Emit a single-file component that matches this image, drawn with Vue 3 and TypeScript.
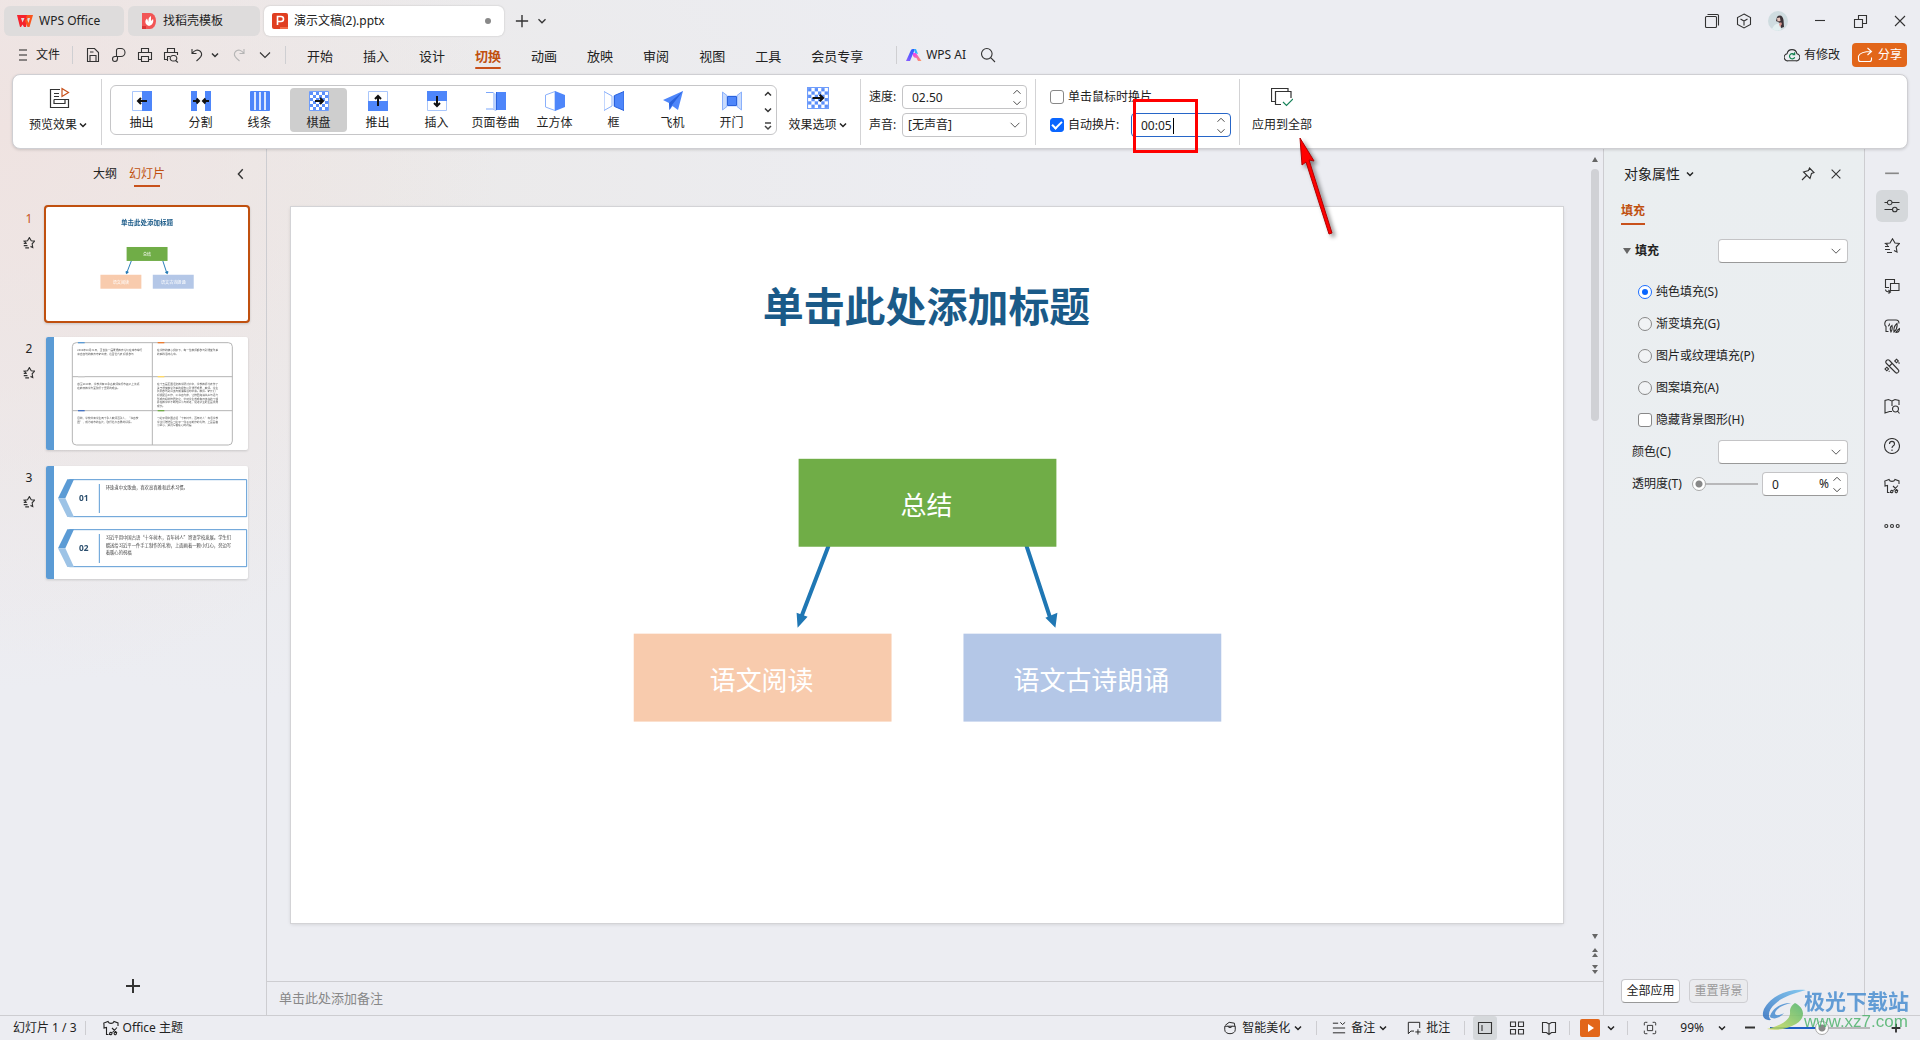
<script setup lang="ts">
import { h, ref } from 'vue'

const icons: Record<string, string> = {
  menu: 'M4 3H12M4 8H12M4 13H12',
  save: 'M2.5 14.5V1.5H9.5L13.5 5.5V14.5ZM5 14V8.5H11V14M5 5H8.5',
  output: 'M5.5 9.5V3A2 2 0 0 1 7.5 1.500H10A4 4 0 0 1 10 9.500H4A2.500 2.500 0 0 0 4 14.500C6 14.500 6.500 13 6.500 11.500V9.500',
  print: 'M4.500 5.500V1.500H11.500V5.500M4 12.500H1.500V5.500H14.500V12.500H12M4.500 9.500H11.500V14.500H4.500Z',
  preview: 'M4.500 5.500V1.500H11.500V5.500M4 12.500H1.500V5.500H14.500V8M4.500 14V9.500H7M10.500 8.500A2.800 2.800 0 1 0 10.500 14A2.800 2.800 0 1 0 10.500 8.500M12.500 13.500L15 15.500',
  undo: 'M3 2V6.500H7.500M3 6.500C5.500 3 9 2 11.500 4.500C14.500 8 11 11 7.500 14',
  redo: 'M13 2V6.500H8.500M13 6.500C10.500 3 7 2 4.500 4.500C1.500 8 5 11 8.500 14',
  down: 'M4 6L8 10L12 6',
  up: 'M4 10L8 6L12 10',
  left: 'M10 2.500L5 8L10 13.500',
  wide: 'M3 5.500L8 10.500L13 5.500',
  search: 'M6.800 1.500A5.300 5.300 0 1 0 6.800 12.100A5.300 5.300 0 1 0 6.800 1.500M10.700 10.700L15 15',
  windows: 'M1.500 4.500A1 1 0 0 1 2.500 3.500H11.500A1 1 0 0 1 12.500 4.500V13.500A1 1 0 0 1 11.500 14.500H2.500A1 1 0 0 1 1.500 13.500ZM3.500 1.500H13.500A1 1 0 0 1 14.500 2.500V12.500',
  cube: 'M8 1L14.500 4.500V11.500L8 15L1.500 11.500V4.500ZM4.500 6L8 8L11.500 6M8 8V12.500',
  minus: 'M3 7.500H13',
  restore: 'M2.500 6.500H10.500V14.500H2.500ZM6.500 6V2.500H14.500V10.500H11',
  close: 'M3 3L13 13M13 3L3 13',
  share: 'M1.500 9V12.500A2 2 0 0 0 3.500 14.500H12.500A2 2 0 0 0 14.500 12.500V10.500M1.500 9C3 6 7 4.500 14 4.500M10.500 1L14.500 4.500L10.500 8',
  pin: 'M9.500 2L14 6.500L11.500 7.500L10 12.500L3.500 6L8.500 4.500ZM6.500 9.500L2 14',
  sliders: 'M0.500 4.500H3.500M8 4.500H15.500M5.700 2.200A2.300 2.300 0 1 0 5.700 6.800A2.300 2.300 0 1 0 5.700 2.200M0.500 11.500H8.500M13 11.500H15.500M10.800 9.200A2.300 2.300 0 1 0 10.800 13.800A2.300 2.300 0 1 0 10.800 9.200',
  star: 'M4 7.500L1.500 5.500L6 5L8.500 0.800L11 5L15.500 5.500L12.200 9L13 14L10 12.500M1 8.500H5M1 11.500H6M3 14.500H8',
  shapes: 'M5 9.500H1.500V1.500H10.500V5M6.500 5.500H15V12.500H6.500ZM1.500 11.500C1.500 13.500 3 14 6 14M4.500 12L6.500 14L4.500 15.500',
  design: 'M4.500 13.500H2V8.500C0 7 0.500 2 4 2H12C14 2 15 3.500 15 5.500M4 8C5.500 8 5.500 6.500 5.500 5.500M7 14C5.500 10.500 6.500 8.500 8 7.500C8.500 10 8.500 12 7 14ZM10 14C9.500 10 11 7 13 5.500C13.500 9 12.500 12 10 14ZM12 14.500C13 12.500 14 11 15.500 10.500C15.500 13 14.500 14.500 12 14.500Z',
  tools: 'M2.500 5.500A1.800 1.800 0 0 1 5.500 2.500L14 11.500A1.800 1.800 0 0 1 11.500 14.500ZM5.500 8L8 5.500M12.500 1.200L14.300 3L12.500 4.800L10.700 3ZM14.500 4.500L15.500 5.500M2.800 9.200L4.600 11L2.800 12.800L1 11ZM4.800 13L5.500 13.700',
  booksearch: 'M5.500 13.500L1 15V2.500L4.500 1.500L8 3V8M8 3L11 1.500L15 2.500V7M8 13.500L5 13.500M11.500 8A3 3 0 1 0 11.500 14A3 3 0 1 0 11.500 8M13.500 13L15.500 15.500',
  help: 'M8 0.500A7.500 7.500 0 1 0 8 15.500A7.500 7.500 0 1 0 8 0.500M5.500 6C5.500 2.500 10.500 2.500 10.500 6C10.500 8 8 7.500 8 10M8 11.500V13',
  shirt: 'M5 14.500H3.500V7.500L1 8V5L0.800 3L5 1.500C6 4 10 4 11 1.500L15 3V6M5.500 14.500H8M9 8L14 13M14 7.500L9.500 12.500M9 13.500A1.200 1.200 0 1 0 9 13.600M13.500 13.500A1.200 1.200 0 1 0 13.500 13.600',
  dots: 'M2.300 6.500A1.500 1.500 0 1 0 2.300 9.500A1.500 1.500 0 1 0 2.300 6.500M8 6.500A1.500 1.500 0 1 0 8 9.500A1.500 1.500 0 1 0 8 6.500M13.700 6.500A1.500 1.500 0 1 0 13.700 9.500A1.500 1.500 0 1 0 13.700 6.500',
  plus: 'M8 1V15M1 8H15',
  beautify: 'M2.500 5L7 1.500L13 2.500L13.500 6M2 6H14V10C14 16 2 16 2 10ZM5.500 6C7 8 9 8 10.500 6',
  notes: 'M1 2.500H7M1 8H15M1 13.500H15M9.500 1.500L12 4L15 1.500',
  comment: 'M14.500 8V1.500H1.500V14.500L4.500 11.500H8M12.500 9.500V15.500M9.500 12.500H15.500',
  normal: 'M1.500 2.500H14.500V13.500H1.500ZM5 5V11',
  grid: 'M1.500 2H6.500V6.500H1.500ZM9.500 2H14.500V6.500H9.500ZM1.500 9.500H6.500V14H1.500ZM9.500 9.500H14.500V14H9.500Z',
  read: 'M8 4V14M8 4L5.500 2.500H1.500V12.500H5.500L8 14.500L10.500 12.500H14.500V2.500H10.500Z',
  fit: 'M1.500 5V2.500A1 1 0 0 1 2.500 1.500H5M11 1.500H13.500A1 1 0 0 1 14.500 2.500V5M14.500 11V13.500A1 1 0 0 1 13.500 14.500H11M5 14.500H2.500A1 1 0 0 1 1.500 13.500V11M5 5H11V11H5Z',
}

const Ic = (p: { n: string; s?: number; w?: number }) =>
  h('svg', { viewBox: '0 0 16 16', width: p.s ?? 16, height: p.s ?? 16, fill: 'none', stroke: 'currentColor', 'stroke-width': p.w ?? 1.1, 'aria-hidden': 'true' }, [
    h('path', { d: icons[p.n] }),
  ])
Ic.props = ['n', 's', 'w']

const menus = ['开始', '插入', '设计', '切换', '动画', '放映', '审阅', '视图', '工具', '会员专享']
const effects = ['抽出', '分割', '线条', '棋盘', '推出', '插入', '页面卷曲', '立方体', '框', '飞机', '开门']
const quick = ['save', 'output', 'print', 'preview', 'undo']
const side = ['sliders', 'star', 'shapes', 'design', 'tools', 'booksearch', 'help', 'shirt', 'dots']
const fills = ['纯色填充(S)', '渐变填充(G)', '图片或纹理填充(P)', '图案填充(A)']

// checkerboard squares shared by the gallery tile and the options button
const checks: { x: number; y: number }[] = []
for (let r = 0; r < 6; r++) for (let c = 0; c < 6; c++) if ((r + c) % 2 === 0) checks.push({ x: 1 + c * 3, y: 1 + r * 3 })

const nodes = [
  { x: 508, y: 252, fill: '#70ad47', t: '总结' },
  { x: 343, y: 427, fill: '#f8cbad', t: '语文阅读' },
  { x: 673, y: 427, fill: '#b4c7e7', t: '语文古诗朗诵' },
]

const cells = [
  { x: 232, y: 42, bar: '#5b9bd5', lines: ['2008年10月31日，全省第一届素质教育论坛在本市举行', '来自各地的教育专家出席，近百位代表 积极参与'] },
  { x: 471, y: 42, bar: '#ed7d31', lines: ['在学校的精心组织下，每一位教师都参与到课堂改革', '的实践活动之中。'] },
  { x: 232, y: 144, bar: '#cccccc', lines: ['截至2010年，学校共有40余名教师获得市级以上奖项', '在教育教学方面取得了显著的成绩。'] },
  { x: 471, y: 144, bar: '#ffd966', lines: ['在十五届全国语文教学研讨会中，学校教师代表作了', '关于课堂教学改革的报告以及课题成果，教师、学生', '共同参与到阅读与朗诵等活动中来。教师、家长们', '积极配合工作，以书香为伴，让校园充满书声与活力', '形成良好的校园文化，带动学生养成每日读书的习惯', '并在教学中不断地探索与前进，促进学生的全面发展', '成长。'] },
  { x: 232, y: 246, bar: '#4472c4', lines: ['目前，学校共有学生两千余人教师百余人，“书香校', '园”，成为城市的名片，取得社会各界的好评。'] },
  { x: 471, y: 246, bar: '#70ad47', lines: ['习近平用中国古语“十年树木，百年树人”寄语学校', '学生们赠送给习近平一件手工制作的礼物，上面画着', '小红心，旁边写着暖心的祝福'] },
]

const agenda = [
  { n: '01', y: 40, lines: ['环珠道中文歌曲，喜欢高喜雅和武术习惯。'] },
  { n: '02', y: 190, lines: ['习近平用中国古语“十年树木，百年树人”寄语学校发展。学生们', '赠送给习近平一件手工制作的礼物，上面画着一颗小红心，旁边写', '着暖心的祝福'] },
]

const menu = ref('切换')
const effect = ref('棋盘')
const speed = ref('02.50')
const advance = ref('00:05')
const onClick = ref(false)
const auto = ref(true)
const fill = ref(fills[0])
const hideBg = ref(false)
const alpha = ref(0)
const zoom = ref(52)
</script>

<template>
  <div class="app">
    <header class="titlebar">
      <button class="tab home">
        <svg width="16" height="12" viewBox="0 0 16 12"><path d="M0 0H11L10 3H4L5.500 7.500L7.500 3H10.500L9 12H7L5.500 9.500L4 12H3Z" fill="#f5222d" /><path d="M10 0H16L12.500 12H10.500L8 6L9.500 3L11.500 8L13 3H9Z" fill="#fa541c" /></svg>
        WPS Office
      </button>
      <button class="tab docer">
        <svg width="16" height="16" viewBox="0 0 16 16"><path d="M1 0H9A6 8 0 0 1 9 16H1Z" fill="#f25555" /><path d="M1 13H5V16H1Z" fill="#d93636" /><path d="M8 13C3 11 4 7 6 5.500L7.500 9C7 6 8 4 10 3V8L12 6C13 9 11.500 12 8 13Z" fill="#fff" /></svg>
        找稻壳模板
      </button>
      <button class="tab file">
        <svg width="16" height="16" viewBox="0 0 16 16"><rect width="16" height="16" rx="2" fill="#e03e20" /><path d="M8 14H16V16H8Z" fill="#f36b45" /><path d="M5.500 12V3.500H9A2.500 2.500 0 0 1 9 8.500H5.500" fill="none" stroke="#fff" stroke-width="1.600" /></svg>
        演示文稿(2).pptx
        <i class="dot"></i>
      </button>
      <button class="ico new" aria-label="新建"><Ic n="plus" :s="14" :w="1.6" /></button>
      <button class="ico" aria-label="更多"><Ic n="down" :s="14" :w="1.5" /></button>
      <div class="winbtns">
        <button class="ico" aria-label="窗口"><Ic n="windows" /></button>
        <button class="ico" aria-label="应用"><Ic n="cube" /></button>
        <button class="ico" aria-label="账户">
          <svg width="20" height="20" viewBox="0 0 20 20"><circle cx="10" cy="10" r="10" fill="#cfdce0" /><path d="M4 18C6 13 9 12 12 13L13 19A10 10 0 0 1 4 18Z" fill="#e4f0f1" /><path d="M9 6C12 3 15 5 15.500 9L16 16L13 17L12 12L8 10Z" fill="#3b3237" /><path d="M9 7L12 6.500L12.500 10L9.500 10.500Z" fill="#e5c4bb" /><path d="M11 13L13 11L14 13L12 16Z" fill="#d8968f" /></svg>
        </button>
        <button class="ico far" aria-label="最小化"><Ic n="minus" /></button>
        <button class="ico far" aria-label="还原"><Ic n="restore" /></button>
        <button class="ico far" aria-label="关闭"><Ic n="close" /></button>
      </div>
    </header>

    <nav class="menubar">
      <button class="filebtn"><Ic n="menu" />文件</button>
      <i class="vr"></i>
      <div class="quick">
        <button v-for="q in quick" :key="q" class="ico" :aria-label="q"><Ic :n="q" /></button>
      </div>
      <button class="ico" aria-label="撤销列表"><Ic n="down" :s="12" :w="2" /></button>
      <button class="ico redo" aria-label="恢复"><Ic n="redo" /></button>
      <button class="ico" aria-label="自定义"><Ic n="wide" /></button>
      <i class="vr"></i>
      <div class="menus">
        <button v-for="m in menus" :key="m" :class="{ on: m === menu }" @click="menu = m">{{ m }}</button>
      </div>
      <i class="vr"></i>
      <button class="ai">
        <svg width="16" height="12" viewBox="0 0 16 12"><defs><linearGradient id="ai1" x1="0" y1="1" x2="1" y2="0"><stop offset="0" stop-color="#8f5bff" /><stop offset="1" stop-color="#1c5fff" /></linearGradient><linearGradient id="ai2" x1="0" y1="0" x2="1" y2="1"><stop offset="0" stop-color="#e93cff" /><stop offset="1" stop-color="#ff9a5c" /></linearGradient></defs><path d="M0 12L5 1Q5.500 0 7 0H9L4 12Z" fill="url(#ai1)" /><path d="M7 4H10L15.500 12H12L10.500 9Q8 9 7 7Z" fill="url(#ai2)" /><path d="M8 0H10L12 5L9 4Z" fill="#31b5ff" /></svg>
        WPS AI
      </button>
      <button class="ico" aria-label="搜索"><Ic n="search" /></button>
      <div class="right">
        <button class="cloud">
          <svg width="16" height="16" viewBox="0 0 18 16" fill="none"><path d="M5 14.500A4 4 0 0 1 3.500 6.500A5.600 5.600 0 0 1 14.500 6.500A4 4 0 0 1 13 14.500Z" stroke="#333" stroke-width="1.200" /><path d="M11.500 7.500A3 3 0 1 0 12 10.500M9.500 7.500H12V5" stroke="#13824f" stroke-width="1.300" /></svg>
          有修改
        </button>
        <button class="share"><Ic n="share" />分享</button>
      </div>
    </nav>

    <section class="ribbon">
      <div class="group first">
        <button class="big">
          <svg width="22" height="22" viewBox="0 0 22 22" fill="none" stroke="#333" stroke-width="1.200"><path d="M12 2.500H2.500V20.500H20.500V12.500H6M6 6.500H11M6 9.500H11M6 12.500V16.500H17V13" /><path d="M14 1.500L20.500 5.500L14 9.500Z" stroke="#c8511b" /></svg>
          <span>预览效果<Ic n="down" :s="12" :w="2" /></span>
        </button>
      </div>

      <div class="gallery">
        <button v-for="(e, i) in effects" :key="i" class="tile" :class="{ on: e === effect }" @click="effect = e">
          <svg width="20" height="20" viewBox="0 0 20 20">
            <g v-if="i === 0"><path d="M.5.500H19.500V19.500H.5Z" fill="#fff" stroke="#a9c6fb" /><path d="M10 0H20V20H10Z" fill="#4e86fa" /><path d="M15 10H6M9 7L6 10L9 13" class="ar" /></g>
            <g v-else-if="i === 1"><path d="M0 0H20V20H0Z" fill="#4e86fa" /><path d="M6 0H14V20H6Z" fill="#fff" /><path d="M2 10H8M5.500 7.500L8 10L5.500 12.500M18 10H12M14.500 7.500L12 10L14.500 12.500" class="ar" /></g>
            <g v-else-if="i === 2"><path d="M.5.500H19.500V19.500H.5Z" fill="#dbe7ff" stroke="#4e86fa" /><path d="M1 0H4V20H1ZM6 0H9V20H6ZM11 0H14V20H11ZM16 0H19V20H16Z" fill="#4e86fa" /></g>
            <g v-else-if="i === 3"><path d="M.5.500H19.500V19.500H.5Z" fill="#fff" stroke="#6f9dfb" /><rect v-for="(c, k) in checks" :key="k" :x="c.x" :y="c.y" width="3" height="3" fill="#5b8ffa" /><path d="M6 10H14M11 7L14 10L11 13" class="ar" /></g>
            <g v-else-if="i === 4"><path d="M.5.500H19.500V19.500H.5Z" fill="#fff" stroke="#a9c6fb" /><path d="M0 10H20V20H0Z" fill="#4e86fa" /><path d="M10 15V5M7 8L10 5L13 8" class="ar" /></g>
            <g v-else-if="i === 5"><path d="M.5.500H19.500V19.500H.5Z" fill="#fff" stroke="#a9c6fb" /><path d="M0 0H20V10H0Z" fill="#4e86fa" /><path d="M10 5V15M7 12L10 15L13 12" class="ar" /></g>
            <g v-else-if="i === 6"><path d="M-.5 1.500H7L10 4V19.500L7 18H-.5Z" fill="#fff" stroke="#7ba7fb" /><path d="M7 1L10 3V20L7 18Z" fill="#bcd2fd" /><path d="M10 1H20V19H10Z" fill="#4e86fa" /><path d="M10.500 1V19" stroke="#2a62dc" /></g>
            <g v-else-if="i === 7"><path d="M10 .5L.5 4V16L10 19.500Z" fill="#fff" stroke="#8ab0fb" /><path d="M10 0L20 4V16L10 20Z" fill="#4e86fa" /></g>
            <g v-else-if="i === 8"><path d="M0 .5L8 5V15L0 19.500Z" fill="#fff" stroke="#8ab0fb" /><path d="M9 5L10.500 4V16L9 15Z" fill="#bcd2fd" /><path d="M10.500 4.500L20 .5V19.500L10.500 15.500Z" fill="#4e86fa" stroke="#2a62dc" /></g>
            <g v-else-if="i === 9"><path d="M20 0L0 9L6 12L6.500 19L9.500 15L15 19Z" fill="#4e86fa" /><path d="M20 0L6 12L6.500 19L9 14Z" fill="#2a62dc" /></g>
            <g v-else><path d="M.5 1L5 4.500V15.500L.5 19ZM19.500 1L15 4.500V15.500L19.500 19Z" fill="#c9dbfd" stroke="#8ab0fb" /><path d="M5 4H15V16H5Z" fill="#dbe7ff" /><path d="M5.500 5.500H14.500V14.500H5.500Z" fill="#4e86fa" stroke="#2a62dc" /></g>
          </svg>
          {{ e }}
        </button>
        <div class="scrolls">
          <button class="ico" aria-label="上一行"><Ic n="up" :s="12" :w="2" /></button>
          <button class="ico" aria-label="下一行"><Ic n="down" :s="12" :w="2" /></button>
          <button class="ico" aria-label="全部效果"><svg width="12" height="12" viewBox="0 0 12 12" fill="none" stroke="#444" stroke-width="1.500"><path d="M3 3H9M3 6L6 9L9 6" /></svg></button>
        </div>
      </div>

      <div class="group opts">
        <button class="big">
          <svg width="22" height="22" viewBox="0 0 20 20"><path d="M.5.500H19.500V19.500H.5Z" fill="#fff" stroke="#6f9dfb" /><rect v-for="(c, k) in checks" :key="k" :x="c.x" :y="c.y" width="3" height="3" fill="#5b8ffa" /><path d="M5 10H14.500M11.500 7L14.500 10L11.500 13" class="ar" /></svg>
          <span>效果选项<Ic n="down" :s="12" :w="2" /></span>
        </button>
      </div>

      <div class="group fields">
        <div class="row">
          <label for="speed">速度:</label>
          <div class="spin box"><input id="speed" v-model="speed" /><span class="steps"><button aria-label="增加"><Ic n="up" :s="14" /></button><button aria-label="减少"><Ic n="down" :s="14" /></button></span></div>
        </div>
        <div class="row">
          <label for="sound">声音:</label>
          <div class="box drop"><select id="sound"><option>[无声音]</option></select><Ic n="wide" :s="14" /></div>
        </div>
      </div>

      <div class="group timing">
        <div class="row"><label class="check"><input v-model="onClick" type="checkbox" />单击鼠标时换片</label></div>
        <div class="row">
          <label class="check wide"><input v-model="auto" type="checkbox" />自动换片:</label>
          <div class="spin box focus"><input v-model="advance" aria-label="自动换片时间" /><i class="caret"></i><span class="steps"><button aria-label="增加"><Ic n="up" :s="14" /></button><button aria-label="减少"><Ic n="down" :s="14" /></button></span><i class="redbox"></i></div>
        </div>
      </div>

      <div class="group apply">
        <button class="big">
          <svg width="22" height="22" viewBox="0 0 22 22" fill="none" stroke="#333" stroke-width="1.200"><path d="M4 14.500H.5V1.500H17V4M10 17.500H4.500V4.500H20V11" /><path d="M12 15L15.500 18.500L22 12" stroke="#17835a" /></svg>
          <span>应用到全部</span>
        </button>
        <svg class="pointer" width="46" height="108" viewBox="0 0 46 108"><path d="M4 2L18 25L13 24L36 97L33 98L10 26L6 29Z" fill="#f00" stroke="#b00000" stroke-width="1" stroke-linejoin="round" /></svg>
      </div>
    </section>

    <main class="main">
      <aside class="slides">
        <div class="sh">
          <button>大纲</button>
          <button class="on">幻灯片</button>
          <button class="ico col" aria-label="收起"><Ic n="left" :s="14" :w="1.6" /></button>
        </div>
        <ol>
          <li class="cur">
            <div class="num">1<Ic n="star" :s="12" :w="1.5" /></div>
            <div class="thumb">
              <svg viewBox="0 0 1273 716">
                <text x="636" y="115" class="ttl">单击此处添加标题</text>
                <g stroke="#1f77b4" stroke-width="6" fill="#1f77b4"><path d="M538 339L510 412M736 339L760 412" /><path d="M507 420L504 407L519 411ZM765 420L753 412L769 407Z" /></g>
                <g v-for="n in nodes" :key="n.t"><rect :x="n.x" :y="n.y" width="258" height="88" :fill="n.fill" /><text :x="n.x + 129" :y="n.y + 56" class="nt">{{ n.t }}</text></g>
              </svg>
            </div>
          </li>
          <li>
            <div class="num">2<Ic n="star" :s="12" :w="1.5" /></div>
            <div class="thumb">
              <svg viewBox="0 0 606 340">
                <path d="M0 0H24V340H0Z" fill="#5b9bd5" />
                <g transform="translate(-138 0)">
                  <rect x="217" y="17" width="480" height="307" rx="12" fill="none" stroke="#b5b5b5" stroke-width="3" />
                  <path d="M457 17V324M217 119H697M217 221H697" stroke="#b5b5b5" stroke-width="3" />
                  <g v-for="(c, k) in cells" :key="k"><rect :x="c.x + 2" :y="c.y - 27" width="20" height="4" :fill="c.bar" /><text v-for="(l, j) in c.lines" :key="j" :x="c.x" :y="c.y + j * 11" class="tiny">{{ l }}</text></g>
                </g>
              </svg>
            </div>
          </li>
          <li>
            <div class="num">3<Ic n="star" :s="12" :w="1.5" /></div>
            <div class="thumb">
              <svg viewBox="0 0 606 340">
                <path d="M0 0H24V340H0Z" fill="#5b9bd5" />
                <g v-for="a in agenda" :key="a.n" :transform="`translate(0 ${a.y})`">
                  <path d="M70 1H602V112H70" fill="none" stroke="#5b9bd5" stroke-width="3" />
                  <path d="M64 0H84L58 57H36Z" fill="#5b9bd5" /><path d="M36 57H58L84 113H64Z" fill="#9dc3e6" />
                  <path d="M160 14V101" stroke="#5b9bd5" stroke-width="3" />
                  <text x="99" y="64" class="no">{{ a.n }}</text>
                  <text v-for="(l, j) in a.lines" :key="j" x="179" :y="29 + j * 23" class="small">{{ l }}</text>
                </g>
              </svg>
            </div>
          </li>
        </ol>
        <button class="ico add" aria-label="新建幻灯片"><Ic n="plus" :w="2" /></button>
      </aside>

      <section class="editor">
        <div class="stage">
          <svg class="slide" viewBox="0 0 1273 716">
            <text x="636" y="115" class="ttl">单击此处添加标题</text>
            <path d="M538 339L510 412M736 339L760 412" stroke="#1f77b4" stroke-width="4" />
            <path d="M507 421L506 406L517 410ZM765 421L755 411L767 406Z" fill="#1f77b4" />
            <g v-for="n in nodes" :key="n.t"><rect :x="n.x" :y="n.y" width="258" height="88" :fill="n.fill" /><text :x="n.x + 128" :y="n.y + 56" class="nt">{{ n.t }}</text></g>
          </svg>
          <div class="vbar">
            <svg width="12" height="12" viewBox="0 0 12 12"><path d="M6 4L9 9H3Z" fill="#666" /></svg>
            <div class="track"><i></i></div>
            <svg width="12" height="12" viewBox="0 0 12 12"><path d="M6 8L9 3H3Z" fill="#666" /></svg>
            <svg width="12" height="12" viewBox="0 0 12 12"><path d="M6 1L9 5H3ZM6 6L9 10H3Z" fill="#666" /></svg>
            <svg width="12" height="12" viewBox="0 0 12 12"><path d="M6 6L9 2H3ZM6 11L9 7H3Z" fill="#666" /></svg>
          </div>
        </div>
        <input class="note" placeholder="单击此处添加备注" aria-label="备注" />
      </section>

      <aside class="props">
        <div class="ph">
          <button class="pt">对象属性<Ic n="down" :s="12" :w="2" /></button>
          <button class="ico" aria-label="固定"><Ic n="pin" /></button>
          <button class="ico" aria-label="关闭"><Ic n="close" :s="14" :w="1.3" /></button>
        </div>
        <button class="ptab">填充</button>
        <div class="sec">
          <svg width="8" height="8" viewBox="0 0 8 8"><path d="M0 1H8L4 7Z" fill="#666" /></svg>
          <label for="fillkind">填充</label>
          <div class="box drop"><select id="fillkind"><option></option></select><Ic n="wide" :s="14" /></div>
        </div>
        <label v-for="f in fills" :key="f" class="prow check ind"><input v-model="fill" type="radio" name="fill" :value="f" />{{ f }}</label>
        <label class="prow check ind"><input v-model="hideBg" type="checkbox" />隐藏背景图形(H)</label>
        <div class="prow">
          <label for="color">颜色(C)</label>
          <div class="box drop"><select id="color"><option></option></select><Ic n="wide" :s="14" /></div>
        </div>
        <div class="prow">
          <label for="alpha">透明度(T)</label>
          <input id="alpha" v-model="alpha" class="range" type="range" min="0" max="100" />
          <div class="spin box pct"><input v-model="alpha" aria-label="透明度" /><span>%</span><span class="steps"><button aria-label="增加"><Ic n="up" :s="14" /></button><button aria-label="减少"><Ic n="down" :s="14" /></button></span></div>
        </div>
        <div class="pf"><button>全部应用</button><button disabled>重置背景</button></div>
      </aside>

      <aside class="side">
        <button class="ico fold" aria-label="收起"><Ic n="minus" :s="22" :w="1.2" /></button>
        <div><button v-for="(s, i) in side" :key="s" class="ico" :class="{ on: i === 0 }" :aria-label="s"><Ic :n="s" /></button></div>
      </aside>
    </main>

    <footer class="status">
      <span>幻灯片 1 / 3</span>
      <i class="vr"></i>
      <button class="theme"><Ic n="shirt" />Office 主题</button>
      <div class="sr">
        <button><Ic n="beautify" :s="14" />智能美化<Ic n="down" :s="12" :w="2" /></button>
        <i class="vr"></i>
        <button><Ic n="notes" :s="14" />备注<Ic n="down" :s="12" :w="2" /></button>
        <button class="cm"><Ic n="comment" :s="14" />批注</button>
        <i class="vr"></i>
        <div class="views">
          <button class="ico on" aria-label="普通视图"><Ic n="normal" /></button>
          <button class="ico" aria-label="幻灯片浏览"><Ic n="grid" /></button>
          <button class="ico" aria-label="阅读视图"><Ic n="read" /></button>
        </div>
        <i class="vr"></i>
        <button class="play" aria-label="放映"><svg width="20" height="18" viewBox="0 0 20 18"><rect width="20" height="18" rx="2" fill="#e2661a" /><path d="M8 5L14 9L8 13Z" fill="#fff" /></svg><Ic n="down" :s="12" :w="2" /></button>
        <i class="vr"></i>
        <button class="ico fit" aria-label="适应窗口"><Ic n="fit" :s="14" /></button>
        <button class="zoomv">99%<Ic n="down" :s="12" :w="2" /></button>
        <button class="ico" aria-label="缩小"><Ic n="minus" :w="2" /></button>
        <input v-model="zoom" class="range zr" type="range" min="0" max="100" aria-label="缩放" :style="{ '--p': zoom + '%' }" />
        <button class="ico" aria-label="放大"><Ic n="plus" :s="10" :w="3" /></button>
      </div>
    </footer>

    <div class="mark">
      <svg width="46" height="42" viewBox="0 0 46 42">
        <defs><linearGradient id="mk1" x1="0" y1="1" x2="1" y2="0"><stop offset="0" stop-color="#2f6fc0" /><stop offset="1" stop-color="#74c3f0" /></linearGradient><linearGradient id="mk2" x1="0" y1="1" x2="1" y2="0"><stop offset="0" stop-color="#d3df5c" /><stop offset="1" stop-color="#4db46b" /></linearGradient></defs>
        <path d="M44 1C24 -1 8 8 2 20C-1 27 2 32 9 31C5 27 7 20 13 15C20 8 30 5 44 1Z" fill="url(#mk1)" />
        <path d="M29 14C20 13 9 20 8 28C12 31 18 29 22 24C17 27 13 27 13 24C15 18 22 16 29 14Z" fill="#4a8fd2" />
        <path d="M33 14C43 19 44 29 34 35C26 40 14 42 5 40C18 37 29 31 28 23C28 19 29 17 33 14Z" fill="url(#mk2)" />
      </svg>
      <div><b>极光下载站</b><a href="#">www.xz7.com</a></div>
    </div>
  </div>
</template>

<style>
body { margin: 0; }
</style>

<style scoped>
.app { position: relative; display: flex; flex-direction: column; min-height: 100vh; overflow: hidden; color: #222; font: 12px/18px "Noto Sans", "Noto Sans CJK SC", sans-serif; background: radial-gradient(ellipse 500px 560px at 0 130px, #efe3e1, rgba(239, 227, 225, 0)), radial-gradient(ellipse 700px 500px at 300px 200px, #ebe9e8, rgba(236, 235, 235, 0)), #ecedf2; }
.app * { box-sizing: border-box; }
button { display: flex; align-items: center; padding: 0; border: 0; background: none; color: inherit; font: inherit; white-space: nowrap; }
input, select { font: inherit; color: inherit; }
svg { display: block; flex: none; }
.ico { justify-content: center; color: #333; }
.vr { flex: none; width: 1px; height: 18px; background: #cfcfd2; }
.ar { fill: none; stroke: #111; stroke-width: 2; }

.titlebar { display: flex; align-items: center; gap: 4px; height: 40px; padding: 2px 12px 0 4px; }
.tab { height: 30px; gap: 6px; border-radius: 6px; background: #dedcdc; }
.home { width: 120px; padding-left: 13px; }
.docer { width: 132px; padding-left: 13px; }
.file { width: 240px; padding: 0 13px 0 8px; background: #fff; box-shadow: 0 0 2px #bbb; }
.dot { width: 6px; height: 6px; margin-left: auto; border-radius: 50%; background: #888; }
.new { margin: 0 2px 0 7px; }
.winbtns { display: flex; align-items: center; gap: 16px; margin-left: auto; }
.winbtns .far { margin-left: 8px; }

.menubar { display: flex; align-items: center; height: 34px; padding: 0 13px 4px 15px; }
.filebtn { gap: 5px; margin-right: 12px; }
.quick { display: flex; gap: 10px; margin: 0 4px 0 12px; }
.redo { margin: 0 10px; color: #b5b5b5; }
.redo + .ico { margin-right: 12px; }
.menus { display: flex; gap: 30px; margin: 0 33px 0 21px; font-size: 13px; }
.menus button { position: relative; height: 30px; padding-top: 1px; }
.menus .on, .ptab, .sh .on { color: #c0500f; }
.menus .on { font-weight: 700; }
.menus .on::after { content: ""; position: absolute; left: 0; right: 0; bottom: 1px; height: 2px; border-radius: 1px; background: #c8511b; }
.ai { gap: 4px; margin: 0 14px 0 9px; }
.right { display: flex; align-items: center; gap: 12px; margin-left: auto; }
.cloud { gap: 4px; }
.share { gap: 5px; height: 24px; padding: 0 5px; border-radius: 4px; background: #e2661a; color: #fff; }

.ribbon { display: flex; align-items: flex-start; height: 75px; margin: 0 12px; padding: 4px 0; border: 1px solid #cfcfd3; border-radius: 8px; background: #fff; box-shadow: 0 1px 3px rgba(0, 0, 0, .15); position: relative; z-index: 2; }
.group { height: 66px; border-right: 1px solid #d3d3d5; }
.first { display: flex; justify-content: center; width: 89px; margin-right: 8px; padding-left: 4px; }
.opts { display: flex; justify-content: center; width: 84px; }
.big { flex-direction: column; align-self: flex-start; gap: 7px; padding-top: 8px; }
.big span { display: flex; align-items: center; }
.gallery { display: flex; gap: 2px; margin-top: 6px; padding: 2px; border: 1px solid #c6c6c8; border-radius: 6px; }
.tile { flex-direction: column; gap: 3px; width: 57px; height: 44px; padding-top: 3px; border-radius: 4px; }
.tile.on { background: #cecece; }
.scrolls { display: flex; flex-direction: column; justify-content: space-between; width: 12px; height: 44px; }
.fields { padding: 6px 8px 0; }
.timing { padding: 6px 8px 0 14px; }
.row { display: flex; align-items: center; height: 24px; margin-bottom: 4px; }
.row label { width: 33px; white-space: nowrap; }
.box { position: relative; display: flex; align-items: center; width: 125px; height: 24px; border: 1px solid #c4c4c6; border-radius: 4px; background: #fff; }
.box input, .box select { width: 100%; min-width: 0; height: 22px; border: 0; outline: 0; padding: 0 0 0 9px; background: none; appearance: none; }
.box select { padding: 0 20px 0 5px; }
.drop svg { position: absolute; right: 4px; pointer-events: none; color: #555; }
.steps { flex: none; width: 16px; color: #444; }
.steps button { height: 11px; }
.focus { width: 100px; border-color: #2766c8; }
.caret { position: absolute; left: 41px; top: 4px; width: 1px; height: 16px; background: #000; }
.redbox { position: absolute; left: 1px; top: -15px; width: 65px; height: 54px; border: 3px solid #f00; }
.row .check { width: auto; }
.row .wide { width: 81px; }
.check { display: flex; align-items: center; gap: 4px; }
.check input { flex: none; display: grid; place-items: center; width: 14px; height: 14px; margin: 0; border: 1px solid #888; border-radius: 3px; background: #fff; appearance: none; }
.check input[type=radio] { border-radius: 50%; background: #f1f3f5; }
.check input[type=radio]:checked { border-color: #1a6dff; background: #fff; }
.check input[type=radio]:checked::after { content: ""; width: 6px; height: 6px; border-radius: 50%; background: #0a66ff; }
.check input[type=checkbox]:checked { border-color: #0a66ff; background: #0a66ff; }
.check input[type=checkbox]:checked::after { content: ""; width: 8px; height: 4px; margin-bottom: 2px; border: solid #fff; border-width: 0 0 2px 2px; transform: rotate(-45deg); }
.apply { position: relative; padding: 0 12px; border: 0; }
.pointer { position: absolute; left: 56px; top: 57px; filter: drop-shadow(3px 3px 2px rgba(0, 0, 0, .45)); }

.main { display: flex; flex: 1; }
.slides { display: flex; flex-direction: column; width: 267px; border-right: 1px solid #cdcdd1; }
.sh { display: flex; align-items: center; gap: 12px; height: 49px; padding: 0 18px 0 93px; }
.sh button { height: 26px; position: relative; }
.sh .on::after { content: ""; position: absolute; left: 5px; right: 5px; bottom: 0; height: 2px; background: #c8511b; }
.col { margin-left: auto; }
.slides ol { display: flex; flex-direction: column; gap: 12px; margin: 7px 0 0; padding: 0; list-style: none; }
.slides li { display: flex; }
.num { display: flex; flex-direction: column; align-items: center; gap: 9px; width: 30px; margin-left: 14px; padding-top: 5px; }
.cur .num { color: #c8511b; }
.num svg { color: #333; }
.thumb { width: 206px; border: 2px solid transparent; border-radius: 4px; background: #fff padding-box; filter: drop-shadow(0 1px 1px rgba(0, 0, 0, .15)); }
.thumb svg { width: 100%; border-radius: 2px; }
.cur .thumb { border-color: #c0500f; }
.add { margin: auto auto 21px; }
.ttl { font: 700 41px "Noto Sans CJK SC", sans-serif; fill: #1a5a88; text-anchor: middle; }
.nt { font: 26px "Noto Sans CJK SC", sans-serif; fill: #fff; text-anchor: middle; }
.tiny { font: 8px "Noto Sans CJK SC", sans-serif; fill: #555; }
.small { font: 13px "Noto Sans CJK SC", sans-serif; fill: #444; }
.no { font: 700 25px "Noto Sans", sans-serif; fill: #2c4f6e; }

.editor { display: flex; flex-direction: column; flex: 1; min-width: 0; }
.stage { display: flex; flex: 1; align-items: center; padding-left: 24px; }
.slide { flex: 1; min-width: 0; margin-right: 24px; background: #fff; outline: 1px solid #d3d3d6; box-shadow: 0 1px 4px rgba(0, 0, 0, .15); }
.vbar { display: flex; flex-direction: column; align-items: center; align-self: stretch; gap: 4px; width: 16px; padding: 4px 0 6px; }
.track { flex: 1; }
.track i { display: block; width: 8px; height: 252px; border-radius: 4px; background: #d0d1d5; }
.note { height: 34px; padding: 0 12px 2px; border: 0; border-top: 1px solid #cdcdd1; outline: 0; background: none; font-size: 13px; }
.note::placeholder { color: #888; }

.props { display: flex; flex-direction: column; width: 261px; padding: 0 16px 12px 17px; border-left: 1px solid #cdcdd1; background: linear-gradient(#eaeef0, #ebeef1 50%, #ecedf2); }
.ph { display: flex; align-items: center; gap: 13px; height: 50px; margin-right: 5px; }
.pt { gap: 4px; margin: 0 auto 0 3px; font-size: 14px; }
.ptab { align-self: flex-start; height: 26px; border-bottom: 2px solid #c8511b; font-weight: 700; }
.sec { display: flex; align-items: center; gap: 4px; margin: 14px 0 13px 2px; font-weight: 700; }
.props .drop { width: 130px; margin-left: auto; border-bottom-color: #999; }
.prow { display: flex; align-items: center; height: 32px; padding-left: 11px; }
.ind { padding-left: 17px; }
.range { height: 14px; margin: 0; background: none; appearance: none; }
#alpha { width: 66px; margin-left: auto; }
.range::-webkit-slider-runnable-track { height: 2px; background: #b8b8ba; }
.range::-webkit-slider-thumb { width: 14px; height: 14px; margin-top: -6px; border: 1px solid #aaa; border-radius: 50%; background: radial-gradient(circle, #888 0 3px, #fff 4px); appearance: none; }
.pct { width: 86px; margin-left: 4px; border-bottom-color: #999; }
.pct > span { margin-right: 1px; }
.pf { display: flex; gap: 9px; margin-top: auto; }
.pf button { justify-content: center; width: 59px; height: 24px; border: 1px solid #c6c6ca; border-bottom-color: #999; border-radius: 4px; background: #fff; }
.pf button:disabled { background: #eaebee; border-color: #ceced2; color: #999; }

.side { display: flex; flex-direction: column; align-items: center; width: 56px; padding: 9px 1px 0 0; border-left: 1px solid #cdcdd1; }
.side div { display: flex; flex-direction: column; gap: 8px; }
.side .ico { width: 32px; height: 32px; border-radius: 6px; }
.side .fold { color: #888; }
.side .on { background: #d5d8db; }

.status { display: flex; align-items: center; height: 25px; padding-left: 13px; border-top: 1px solid #cdcdd1; }
.status .vr { height: 14px; background: #cdcdd1; }
.status span { margin-right: 8px; }
.theme { gap: 4px; margin-left: 17px; }
.sr { display: flex; align-items: center; margin-left: auto; padding-right: 19px; }
.sr button { gap: 2px; }
.sr > button:first-child { margin-right: 12px; }
.sr button svg:first-child:not(:last-child) { margin-right: 3px; }
.sr .vr + button { margin-left: 15px; }
.sr .cm { margin: 0 14px 0 18px; gap: 5px; }
.views { display: flex; gap: 8px; margin: 0 8px; }
.views .ico { width: 24px; height: 24px; border-radius: 3px; }
.views .on { background: #d5d8db; }
.sr .vr + .play { margin-left: 10px; margin-right: 10px; }
.sr .zoomv { gap: 12px; margin: 0 14px 0 23px; }
.zr { width: 100px; margin: 0 21px 0 12px; }
.zr::-webkit-slider-runnable-track { background: linear-gradient(90deg, #1f5fc4 var(--p), #b8b8ba var(--p)); }

.mark { position: absolute; right: 11px; bottom: 9px; z-index: 3; display: flex; align-items: center; opacity: .85; pointer-events: none; }
.mark div { display: flex; flex-direction: column; margin-left: -4px; }
.mark b { font: 700 21px/24px "Noto Sans CJK SC", sans-serif; color: #4b8fd0; }
.mark a { font: 17px/19px "Liberation Sans", sans-serif; color: #4fb36d; text-decoration: none; }
</style>
